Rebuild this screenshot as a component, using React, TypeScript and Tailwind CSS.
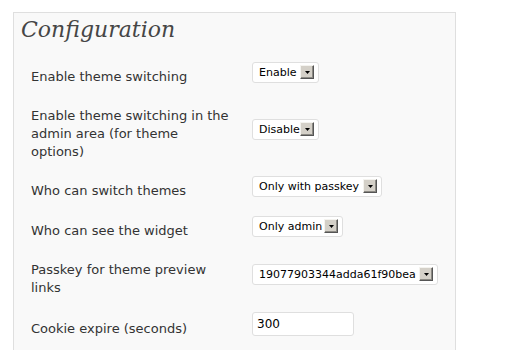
const rows = [
  { label: 'Enable theme switching', kind: 'select', value: 'Enable', width: 'w-[67px]' },
  { label: 'Enable theme switching in the admin area (for theme options)', kind: 'select', value: 'Disable', width: 'w-[67px]' },
  { label: 'Who can switch themes', kind: 'select', value: 'Only with passkey', width: 'w-[130px]' },
  { label: 'Who can see the widget', kind: 'select', value: 'Only admin', width: 'w-[91px]' },
  { label: 'Passkey for theme preview links', kind: 'select', value: '19077903344adda61f90bea', width: 'w-[186px]' },
  { label: 'Cookie expire (seconds)', kind: 'input', value: '300', width: 'w-[102px]' },
];

function ArrowButton() {
  return (
    <span className="flex h-[14px] w-[14px] shrink-0 items-center justify-center border border-t-[#f4f3ef] border-l-[#f4f3ef] border-r-[#555] border-b-[#555] bg-[#d4d0c8] shadow-[inset_-1px_-1px_0_#8c8a84]">
      <svg width="5" height="3" viewBox="0 0 5 3">
        <path d="M0 0h5L2.5 3z" fill="#000" />
      </svg>
    </span>
  );
}

function FakeSelect({ value, width }: { value: string; width: string }) {
  return (
    <div className={`${width} flex h-[21px] items-center rounded-[3px] border border-[#dfdfdf] bg-white pl-[6px] pr-[4px]`}>
      <span className="min-w-0 flex-1 overflow-hidden whitespace-nowrap text-[11px] leading-[19px] text-black">{value}</span>
      <ArrowButton />
    </div>
  );
}

export default function App() {
  return (
    <div className="h-[350px] overflow-hidden bg-white pt-[12px] pl-[13px] font-['DejaVu_Sans',sans-serif]">
      <div className="h-[360px] w-[443px] border border-[#dfdfdf] bg-[#f9f9f9] pt-[4px]">
        <h2 className="pl-[7px] font-['DejaVu_Serif',serif] text-[22px] font-normal italic leading-[26px] text-[#464646]">
          Configuration
        </h2>
        <div className="mt-[9px] flex flex-col pl-[17px]">
          {rows.map((row) => (
            <div key={row.label} className="flex items-center">
              <div className="w-[200px] shrink-0 pt-[15px] pb-[5px] text-[13px] leading-[18px] text-[#333]">{row.label}</div>
              <div className="ml-[21px] py-[9.5px]">
                {row.kind === 'select' ? (
                  <FakeSelect value={row.value} width={row.width} />
                ) : (
                  <div className={`${row.width} flex h-[24px] items-center rounded-[3px] border border-[#dfdfdf] bg-white pl-[4px] text-[12px] text-black`}>
                    {row.value}
                  </div>
                )}
              </div>
            </div>
          ))}
        </div>
      </div>
    </div>
  );
}
